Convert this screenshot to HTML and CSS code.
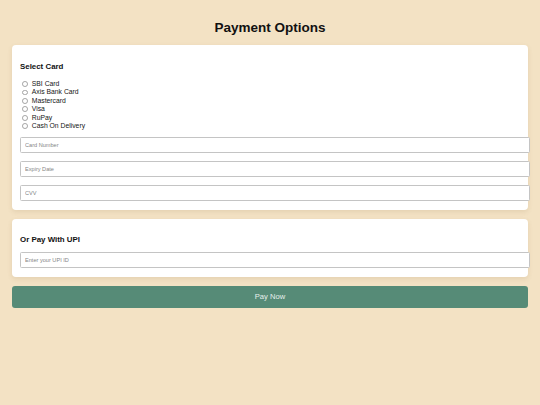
FILE: index.html
```html
<!DOCTYPE html>
<html lang="en">
<head>
<meta charset="utf-8">
<title>Payment Options</title>
<link rel="stylesheet" href="styles.css">
</head>
<body>
  <h1 class="title">Payment Options</h1>

  <section class="card">
    <h3 class="card-heading select-heading">Select Card</h3>
    <div class="options">
      <label class="option"><input type="radio" name="card" class="radio"><span>SBI Card</span></label>
      <label class="option"><input type="radio" name="card" class="radio"><span>Axis Bank Card</span></label>
      <label class="option"><input type="radio" name="card" class="radio"><span>Mastercard</span></label>
      <label class="option"><input type="radio" name="card" class="radio"><span>Visa</span></label>
      <label class="option"><input type="radio" name="card" class="radio"><span>RuPay</span></label>
      <label class="option"><input type="radio" name="card" class="radio"><span>Cash On Delivery</span></label>
    </div>
    <div class="fields">
      <input class="field" type="text" placeholder="Card Number">
      <input class="field" type="text" placeholder="Expiry Date">
      <input class="field" type="text" placeholder="CVV">
    </div>
  </section>

  <section class="card">
    <h3 class="card-heading upi-heading">Or Pay With UPI</h3>
    <div class="fields">
      <input class="field" type="text" placeholder="Enter your UPI ID">
    </div>
  </section>

  <button class="pay-btn" type="button">Pay Now</button>
</body>
</html>
```

FILE: styles.css
```css
* {
  box-sizing: content-box;
}

html, body {
  margin: 0;
  padding: 0;
}

body {
  background: #f3e2c4;
  font-family: "Liberation Sans", Arial, sans-serif;
  font-size: 6.67px;
  color: #111;
  padding: 0 12px;
  min-height: 405px;
}

.title {
  font-size: 13.5px;
  font-weight: bold;
  line-height: 16px;
  text-align: center;
  margin: 20px 0 9px;
  color: #111;
}

.card {
  background: #fff;
  border-radius: 4px;
  padding: 8px 8px 9px;
  margin-bottom: 9px;
  box-shadow: 0 2px 5px rgba(120, 90, 40, 0.12);
}

.card-heading {
  font-size: 7.9px;
  font-weight: bold;
  line-height: 9px;
  margin: 8px 0;
  color: #111;
}

.select-heading {
  margin: 9px 0 9px;
}

.options {
  display: flex;
  flex-direction: column;
  margin-bottom: 6.6px;
}

.option {
  display: flex;
  align-items: center;
  height: 8.4px;
  line-height: 8.4px;
  font-size: 6.8px;
  color: #161616;
}

.radio {
  appearance: none;
  -webkit-appearance: none;
  width: 3.8px;
  height: 3.8px;
  border: 0.7px solid #a3a3a3;
  border-radius: 50%;
  margin: 0 4px 0 2px;
  background: #fff;
  flex: none;
}

.fields {
  display: flex;
  flex-direction: column;
  gap: 8px;
}

.field {
  display: block;
  width: 100%;
  height: 14px;
  padding: 0 4px;
  margin: 0;
  border: 1px solid #c4c4c4;
  border-radius: 1.5px;
  font-family: "Liberation Sans", Arial, sans-serif;
  font-size: 5.6px;
  color: #222;
  background: #fff;
  outline: none;
}

.field::placeholder {
  color: #858585;
}

.pay-btn {
  display: block;
  width: 100%;
  height: 21px;
  margin: 0;
  padding: 0 0 1px;
  border: none;
  border-radius: 3px;
  background: #568b77;
  color: #e6f0ec;
  font-family: "Liberation Sans", Arial, sans-serif;
  font-size: 7.6px;
  text-align: center;
  cursor: pointer;
}
```
